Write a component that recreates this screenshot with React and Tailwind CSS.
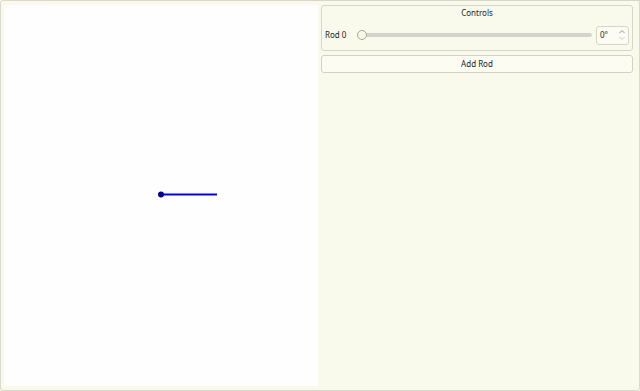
export default function App() {
  return (
    <div className="w-[640px] h-[391px] bg-[#fafaec] overflow-hidden relative" style={{ fontFamily: '"Noto Sans", sans-serif' }}>
      <div className="absolute left-[44px] right-0 top-0 h-px bg-[#d6d6cc]" />
      <div className="w-full h-full border border-[#d9d9cc] rounded-[3px] flex gap-[3px] pl-[3px] pr-[6px] pt-[4px] pb-[4px]">
        <div className="w-[314px] h-full bg-[#fefefe] relative">
          <svg width="314" height="382" className="absolute left-0 top-0">
            <line x1="157" y1="189.5" x2="213" y2="189.5" stroke="#0000e0" strokeWidth="2" />
            <circle cx="157" cy="189.5" r="3" fill="#00008b" />
          </svg>
        </div>
        <div className="flex-1 flex flex-col gap-[4px] text-[8px] text-[#222]">
          <div className="h-[46px] border border-[#d6d6c8] rounded-[3px] flex flex-col px-[3px]">
            <div className="text-center pt-[2px] leading-[10px]">Controls</div>
            <div className="flex items-center mt-[8px] h-[18px]">
              <span className="w-[32px] leading-none">Rod 0</span>
              <div className="flex-1 relative h-[12px] flex items-center">
                <div className="w-full h-[4px] bg-[#d4d4cc] rounded-full" />
                <div className="absolute left-0 top-[1px] w-[10px] h-[10px] rounded-full border border-[#a8a890] bg-[#fafaec]" />
              </div>
              <div className="ml-[4px] w-[33px] h-[19px] border border-[#d6d6c8] rounded-[3px] bg-[#fcfcf4] flex items-center justify-between pl-[3px] pr-[2px]">
                <span className="leading-none">0°</span>
                <svg width="8" height="14" viewBox="0 0 8 14">
                  <path d="M1.5 5 L4 2.5 L6.5 5" fill="none" stroke="#777" strokeWidth="0.8" />
                  <path d="M1.5 9 L4 11.5 L6.5 9" fill="none" stroke="#bbb" strokeWidth="0.8" />
                </svg>
              </div>
            </div>
          </div>
          <div className="h-[18px] border border-[#d2d2c4] rounded-[3px] bg-[#fcfcf2] flex items-center justify-center leading-none">Add Rod</div>
        </div>
      </div>
    </div>
  );
}
